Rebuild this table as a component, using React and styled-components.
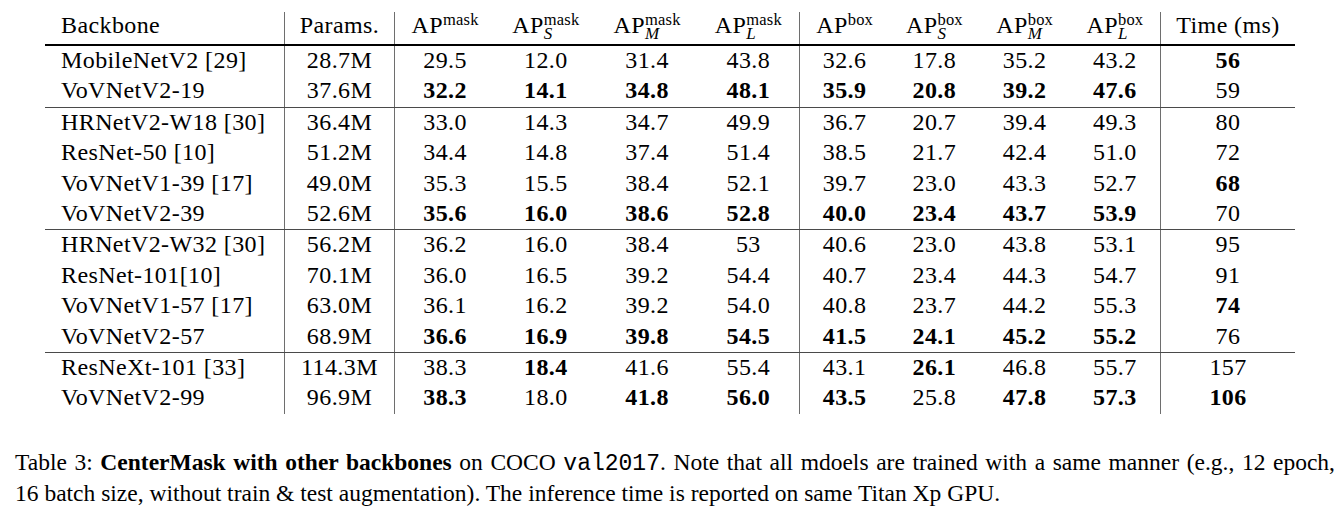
import React from 'react';
import styled, { createGlobalStyle } from 'styled-components';

const GlobalStyle = createGlobalStyle`
  html, body { margin: 0; padding: 0; background: #fff; }
  body {
    font-family: "Liberation Serif", "Times New Roman", serif;
    color: #000;
  }
`;

const COLS = '239px 110px repeat(4, 101.25px) repeat(4, 90.25px) 135px';
const DIVIDERS = new Set([1, 2, 6, 10]);

const Page = styled.div`
  width: 1340px;
  padding-top: 12px;
`;

const Table = styled.div`
  margin-left: 45px;
  width: 1250px;
  font-size: 24px;
  letter-spacing: 0.4px;
`;

const HeaderRow = styled.div`
  display: grid;
  grid-template-columns: ${COLS};
  height: 32px;
  border-bottom: 2px solid #000;
`;

const Group = styled.div`
  border-bottom: ${(p) => (p.$last ? 'none' : '1px solid #4a4a4a')};
`;

const Row = styled.div`
  display: grid;
  grid-template-columns: ${COLS};
  height: 30.4px;
`;

const Cell = styled.div`
  border-left: ${(p) => (p.$divider ? '1px solid #6e6e6e' : 'none')};
  text-align: ${(p) => (p.$left ? 'left' : 'center')};
  padding-left: ${(p) => (p.$left ? '16px' : '0')};
  font-weight: ${(p) => (p.$bold ? 700 : 400)};
  line-height: 28.4px;
  white-space: nowrap;
`;

const HeadCell = styled(Cell)`
  line-height: 24px;
  padding-top: 1px;
`;

const Sup = styled.span`
  font-size: 16.5px;
  letter-spacing: 0.2px;
  line-height: 0;
  vertical-align: 7.7px;
`;

const Scripts = styled.span`
  display: inline-flex;
  flex-direction: column;
  align-items: flex-start;
  vertical-align: 7.7px;
`;

const ScriptTop = styled.span`
  font-size: 16.5px;
  letter-spacing: 0.2px;
  line-height: 13px;
`;

const ScriptBottom = styled.span`
  font-size: 17px;
  font-style: italic;
  line-height: 16.6px;
  letter-spacing: 0;
`;

const Caption = styled.div`
  margin: 34px 0 0 15px;
  width: 1320px;
  font-size: 23.5px;
  line-height: 29px;
`;

const CaptionLine = styled.div`
  text-align: ${(p) => (p.$justify ? 'justify' : 'left')};
  text-align-last: ${(p) => (p.$justify ? 'justify' : 'auto')};
`;

const Code = styled.span`
  font-family: "Liberation Mono", "DejaVu Sans Mono", monospace;
  font-size: 23px;
`;

const AP = ({ sup, sub }) =>
  sub ? (
    <>
      AP
      <Scripts>
        <ScriptTop>{sup}</ScriptTop>
        <ScriptBottom>{sub}</ScriptBottom>
      </Scripts>
    </>
  ) : (
    <>
      AP<Sup>{sup}</Sup>
    </>
  );

const HEADERS = [
  'Backbone',
  'Params.',
  <AP sup="mask" />,
  <AP sup="mask" sub="S" />,
  <AP sup="mask" sub="M" />,
  <AP sup="mask" sub="L" />,
  <AP sup="box" />,
  <AP sup="box" sub="S" />,
  <AP sup="box" sub="M" />,
  <AP sup="box" sub="L" />,
  'Time (ms)',
];

const GROUPS = [
  [
    ['MobileNetV2 [29]', '28.7M', '29.5', '12.0', '31.4', '43.8', '32.6', '17.8', '35.2', '43.2', '*56'],
    ['VoVNetV2-19', '37.6M', '*32.2', '*14.1', '*34.8', '*48.1', '*35.9', '*20.8', '*39.2', '*47.6', '59'],
  ],
  [
    ['HRNetV2-W18 [30]', '36.4M', '33.0', '14.3', '34.7', '49.9', '36.7', '20.7', '39.4', '49.3', '80'],
    ['ResNet-50 [10]', '51.2M', '34.4', '14.8', '37.4', '51.4', '38.5', '21.7', '42.4', '51.0', '72'],
    ['VoVNetV1-39 [17]', '49.0M', '35.3', '15.5', '38.4', '52.1', '39.7', '23.0', '43.3', '52.7', '*68'],
    ['VoVNetV2-39', '52.6M', '*35.6', '*16.0', '*38.6', '*52.8', '*40.0', '*23.4', '*43.7', '*53.9', '70'],
  ],
  [
    ['HRNetV2-W32 [30]', '56.2M', '36.2', '16.0', '38.4', '53', '40.6', '23.0', '43.8', '53.1', '95'],
    ['ResNet-101[10]', '70.1M', '36.0', '16.5', '39.2', '54.4', '40.7', '23.4', '44.3', '54.7', '91'],
    ['VoVNetV1-57 [17]', '63.0M', '36.1', '16.2', '39.2', '54.0', '40.8', '23.7', '44.2', '55.3', '*74'],
    ['VoVNetV2-57', '68.9M', '*36.6', '*16.9', '*39.8', '*54.5', '*41.5', '*24.1', '*45.2', '*55.2', '76'],
  ],
  [
    ['ResNeXt-101 [33]', '114.3M', '38.3', '*18.4', '41.6', '55.4', '43.1', '*26.1', '46.8', '55.7', '157'],
    ['VoVNetV2-99', '96.9M', '*38.3', '18.0', '*41.8', '*56.0', '*43.5', '25.8', '*47.8', '*57.3', '*106'],
  ],
];

export default function App() {
  return (
    <Page>
      <GlobalStyle />
      <Table>
        <HeaderRow>
          {HEADERS.map((h, i) => (
            <HeadCell key={i} $left={i === 0} $divider={DIVIDERS.has(i)}>
              {h}
            </HeadCell>
          ))}
        </HeaderRow>
        {GROUPS.map((rows, g) => (
          <Group key={g} $last={g === GROUPS.length - 1}>
            {rows.map((row, r) => (
              <Row key={r}>
                {row.map((v, i) => {
                  const bold = v.startsWith('*');
                  return (
                    <Cell key={i} $left={i === 0} $divider={DIVIDERS.has(i)} $bold={bold}>
                      {bold ? v.slice(1) : v}
                    </Cell>
                  );
                })}
              </Row>
            ))}
          </Group>
        ))}
      </Table>
      <Caption>
        <CaptionLine $justify>
          Table 3: <b>CenterMask with other backbones</b> on COCO <Code>val2017</Code>. Note that all mdoels are
          trained with a same manner (e.g., 12 epoch,
        </CaptionLine>
        <CaptionLine>
          16 batch size, without train &amp; test augmentation). The inference time is reported on same Titan Xp GPU.
        </CaptionLine>
      </Caption>
    </Page>
  );
}
